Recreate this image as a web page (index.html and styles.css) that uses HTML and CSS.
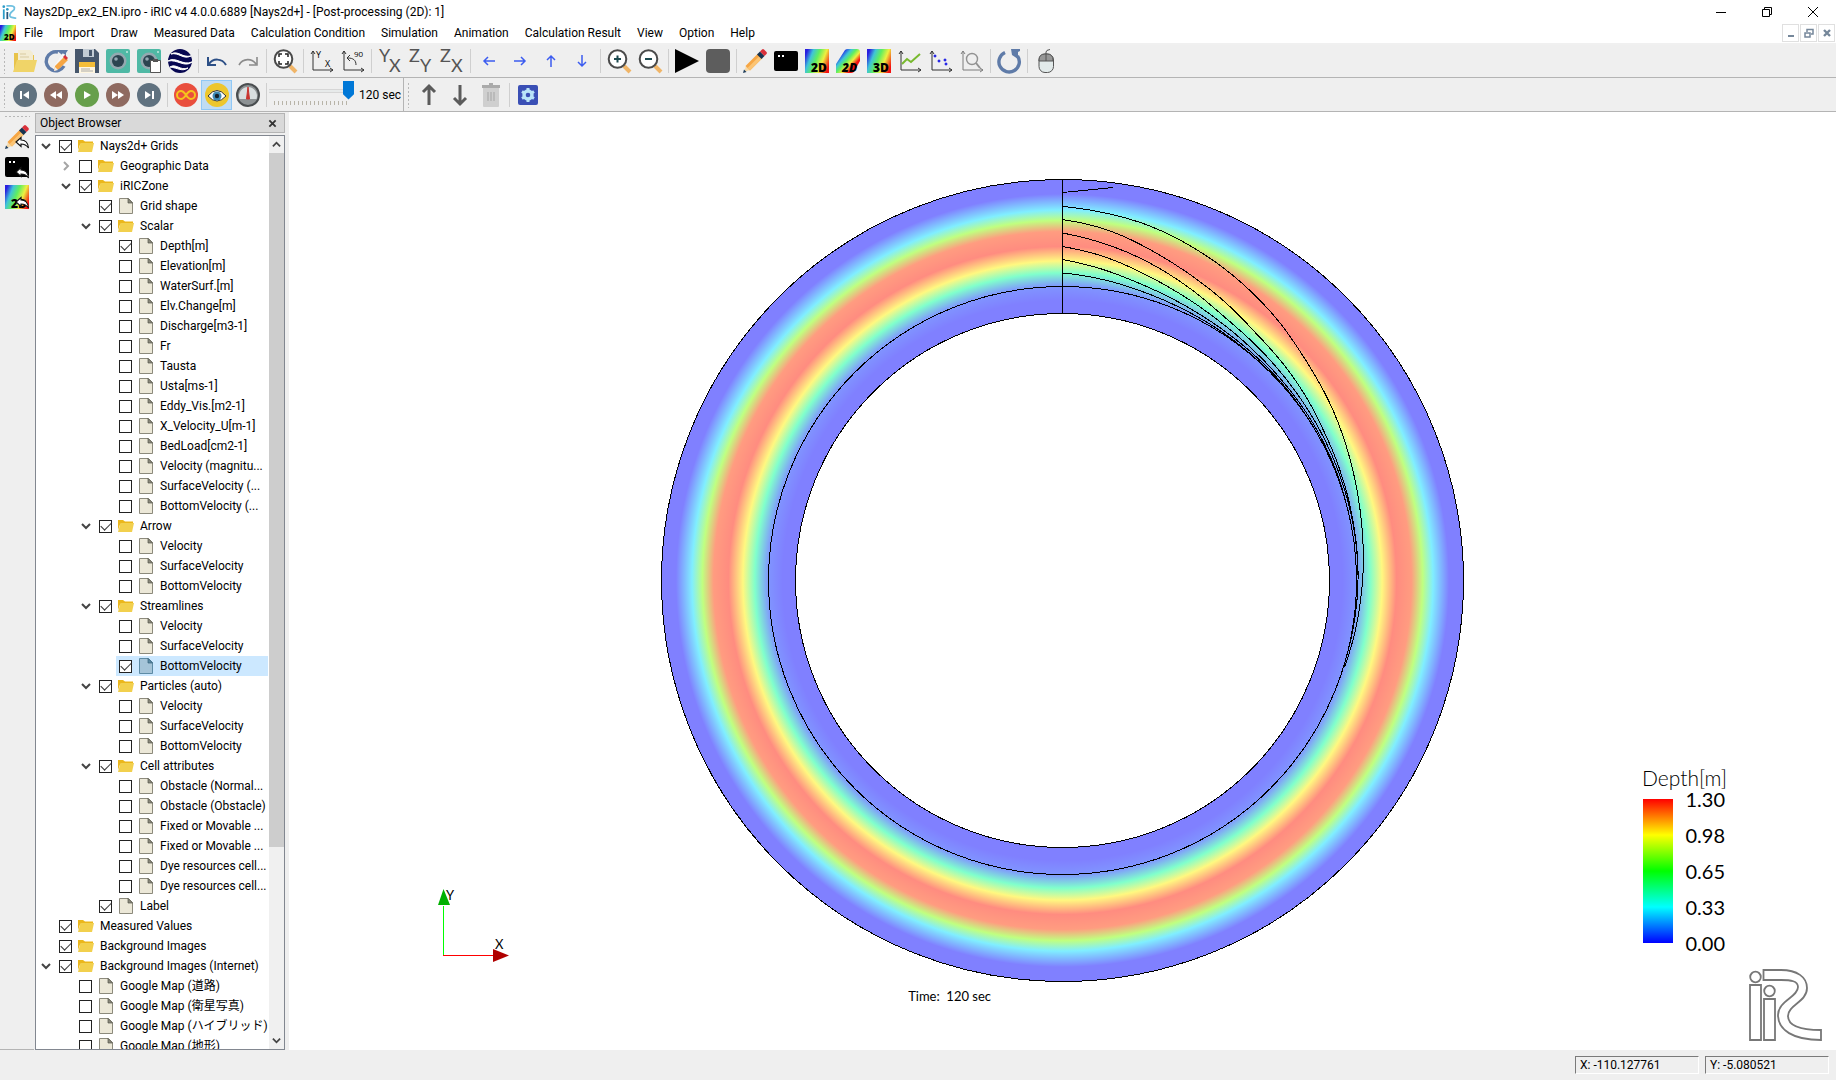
FILE: index.html
```html
<!DOCTYPE html>
<html lang="en">
<head>
<meta charset="utf-8">
<title>Nays2Dp_ex2_EN.ipro - iRIC v4</title>
<link rel="stylesheet" href="styles.css">
</head>
<body>
<svg class="defs" aria-hidden="true">
  <defs>
    <linearGradient id="rainbow" x1="0" y1="0.3" x2="1" y2="0.7">
      <stop offset="0" stop-color="#2a1ee0"/><stop offset="0.22" stop-color="#3fc4d8"/><stop offset="0.45" stop-color="#5fee60"/><stop offset="0.7" stop-color="#eef040"/><stop offset="1" stop-color="#f41010"/>
    </linearGradient>
    <linearGradient id="rainbow-tilt" x1="0.1" y1="0.15" x2="0.9" y2="0.85">
      <stop offset="0.08" stop-color="#1c18e8"/><stop offset="0.3" stop-color="#3fc4d8"/><stop offset="0.45" stop-color="#5fee60"/><stop offset="0.62" stop-color="#eef040"/><stop offset="0.8" stop-color="#f41010"/>
    </linearGradient>
    <symbol id="i-folder" viewBox="0 0 16 16"><path d="M0 2h5l2 1.500h8v3H2L0 12z" fill="#ebb71c"/><path d="M2.500 5H16l-2 9H0z" fill="#f2d04e"/></symbol>
    <symbol id="i-file" viewBox="0 0 16 16"><path d="M1.500.5h9l4 4v11h-13z" fill="#ece8d8" stroke="#8c8a7c"/><path d="M10 .5v4.500h4.500z" fill="#8c8a7c" stroke="#55544c" stroke-width=".7"/></symbol>
    <symbol id="i-file-sel" viewBox="0 0 16 16"><path d="M1.500.5h9l4 4v11h-13z" fill="#a5c4d8" stroke="#5d8ba5"/><path d="M10 .5v4.500h4.500z" fill="#5d8ba5" stroke="#35617c" stroke-width=".7"/></symbol>
    <symbol id="i-down" viewBox="0 0 10 10"><path d="M1 3l4 4 4-4" fill="none" stroke="#444" stroke-width="2"/></symbol>
    <symbol id="i-right" viewBox="0 0 10 10"><path d="M3 1l4 4-4 4" fill="none" stroke="#a5a5a5" stroke-width="2"/></symbol>
    <symbol id="i-up" viewBox="0 0 10 10"><path d="M1 7l4-4 4 4" fill="none" stroke="#444" stroke-width="2"/></symbol>
    <symbol id="i-pencil" viewBox="0 0 24 24"><path d="M1 23l2-6 4 4z" fill="#f6d9a8"/><path d="M0 24l1-3.500L3.500 23z" fill="#1d3c5a"/><path d="M2.500 17L15 4.500l4.500 4.500L7 21.500z" fill="#f6a644"/><path d="M4.500 19L17 6.500l2.500 2.500L7 21.500z" fill="#fbc474"/><path d="M14 5.500L17 2.500 21.500 7 18.500 10z" fill="#173350"/><path d="M17 2.500L19 .5q1-.8 2 0L23.500 3q.8 1 0 2l-2 2z" fill="#d9303a"/></symbol>
    <symbol id="i-console" viewBox="0 0 24 24"><rect y="2" width="24" height="20" rx="2"/><path d="M4 6h2v2H4zM8 6h2v2H8z" fill="#fff"/></symbol>
    <symbol id="i-2d" viewBox="0 0 24 24"><rect width="24" height="24" fill="url(#rainbow)"/><text x="6" y="23" font-size="12" font-weight="800" class="glyph">2D</text></symbol>
    <symbol id="i-3d" viewBox="0 0 24 24"><rect width="24" height="24" fill="url(#rainbow)"/><text x="6" y="23" font-size="12" font-weight="800" class="glyph">3D</text></symbol>
    <symbol id="i-bird" viewBox="0 0 24 24"><path d="M0 24v-9L9 1q1-1 3-1h9q3 0 3 3v9l-5 9q-1 3-4 3z" fill="url(#rainbow-tilt)"/><text x="6" y="23" font-size="12" font-weight="800" font-style="italic" class="glyph">2D</text></symbol>
    <symbol id="i-reply" viewBox="0 0 24 24"><path d="M11 17l5-4.500V15c4.500 0 7 2.500 7.500 8-2-3-4-4-7.500-4v2.500z" fill="#fff" stroke="#111" stroke-width="1.200"/></symbol>
    <symbol id="i-axes" viewBox="0 0 24 24"><path d="M3 2v19h20M1 5l2-3 2 3M20 19l3 2-3 2" fill="none" stroke="#333"/></symbol>
    <symbol id="i-lens" viewBox="0 0 24 24"><path d="M17 17l6 6" stroke="#f0b568" stroke-width="4"/><circle cx="10.500" cy="10" r="8.800" fill="#fff" stroke="#4a4a4a" stroke-width="2"/></symbol>
    <symbol id="i-camera" viewBox="0 0 24 24"><rect width="24" height="24" rx="2" fill="#4fb9a5"/><circle cx="12" cy="12" r="8.500" fill="#94a9b0"/><circle cx="12" cy="12" r="6" fill="#2c4450"/><circle cx="10" cy="10" r="1.800" fill="#93a8b2"/><path d="M20 3h2" stroke="#fff"/></symbol>
    <symbol id="i-arrow" viewBox="0 0 24 24"><path d="M12 22V3M6 9l6-6 6 6" fill="none" stroke="#5b5b5b" stroke-width="3"/></symbol>
    <symbol id="i-blue-arrow" viewBox="0 0 24 24"><path d="M18 12H7M11 8l-4 4 4 4" fill="none" stroke="#3c5cf0" stroke-width="1.500"/></symbol>
    <symbol id="i-rewind" viewBox="0 0 24 24"><circle cx="12" cy="12" r="12" fill="#8f6a60"/><path d="M12 8v8l-6-4zM18 8v8l-6-4z" fill="#fff"/></symbol>
    <symbol id="i-first" viewBox="0 0 24 24"><circle cx="12" cy="12" r="12" fill="#607280"/><path d="M16 8v8l-6-4zM7 8h2v8H7z" fill="#fff"/></symbol>
    <symbol id="i-reload" viewBox="0 0 24 24"><path d="M8 3.500A10.200 10.200 0 1 0 20.500 7" fill="none" stroke="#5f7ba8" stroke-width="3.400"/><path d="M14 0h9v2l-2 1v7l-6-4z" fill="#5f7ba8"/></symbol>
  </defs>
</svg>

<header class="titlebar">
  <svg class="app-icon" viewBox="0 0 18 18"><g fill="#2d9cc8"><circle cx="2" cy="3" r="1.500"/><circle cx="6" cy="6" r="1.500"/><path d="M1 6h2v11H1z"/></g><path d="M5 9h2v8H5z" fill="#26557c"/><path d="M5 2h5c5 0 5 4 2 6s-5 6-1 7 3 1 5 1" fill="none" stroke="#6fc0e0" stroke-width="2"/></svg>
  <h1>Nays2Dp_ex2_EN.ipro - iRIC v4 4.0.0.6889 [Nays2d+] - [Post-processing (2D): 1]</h1>
  <div class="window-buttons">
    <button aria-label="Minimize"><svg viewBox="0 0 10 10"><path d="M0 5.500h10" stroke="#000"/></svg></button>
    <button aria-label="Restore"><svg viewBox="0 0 10 10"><path d="M.5 2.500h7v7h-7zM2.500 2.500v-2h7v7h-2" fill="none" stroke="#000"/></svg></button>
    <button aria-label="Close"><svg viewBox="0 0 10 10"><path d="M0 0l10 10M10 0L0 10" stroke="#000"/></svg></button>
  </div>
</header>

<nav class="menubar">
  <svg class="doc-icon"><use href="#i-2d"/></svg>
  <button>File</button><button>Import</button><button>Draw</button><button>Measured Data</button><button>Calculation Condition</button><button>Simulation</button><button>Animation</button><button>Calculation Result</button><button>View</button><button>Option</button><button>Help</button>
  <div class="mdi-buttons">
    <button aria-label="Minimize view"><svg viewBox="0 0 10 10"><path d="M2 8h6" stroke="#75879a" stroke-width="2"/></svg></button>
    <button aria-label="Restore view"><svg viewBox="0 0 10 10"><path d="M1 5h5v4H1zM3 4V1.500h6V6H7" fill="none" stroke="#75879a" stroke-width="1.500"/></svg></button>
    <button aria-label="Close view"><svg viewBox="0 0 10 10"><path d="M2 2l6 6M8 2L2 8" stroke="#75879a" stroke-width="2.400"/></svg></button>
  </div>
</nav>

<div class="toolbar main-tools">
  <span class="grip"></span>
  <button aria-label="Open"><svg viewBox="0 0 24 24"><path d="M1 4h5l1 2h14v17H1z" fill="#e8c34a"/><path d="M5 1h12l3 3v14H5z" fill="#f3ecd2"/><path d="M7 5h6M7 8h9" stroke="#d9cba0"/><path d="M4 11h20l-3 12H0z" fill="#f0d468"/></svg></button>
  <button aria-label="Reload"><svg viewBox="0 0 24 24"><path d="M14 3A9.500 9.500 0 1 0 20 17" fill="none" stroke="#5f7ba8" stroke-width="3.400"/><path d="M12 1h12l-2 3v5z" fill="#5f7ba8"/><path d="M20 5L10 20" stroke="#f6f6f6" stroke-width="3"/><path d="M10 22l1-5 9-9 4 3-9 9z" fill="#f6a644"/><path d="M19 8l2-2 3 3-2 2z" fill="#d9303a"/><path d="M10 22l1-4 3 3z" fill="#eee"/></svg></button>
  <button aria-label="Save"><svg viewBox="0 0 24 24"><path d="M0 0h20l4 4v20H0z" fill="#47576c"/><path d="M8 0h11v8H8z" fill="#c3ccd4"/><path d="M14 1h3v6h-3z" fill="#47576c"/><path d="M4 13h16v11H4z" fill="#f4bd38"/><path d="M4 18h16v6H4z" fill="#fff6e0"/><path d="M6 20h9M6 22h12" stroke="#aaa"/></svg></button>
  <button aria-label="Snapshot"><svg><use href="#i-camera"/></svg></button>
  <button aria-label="Copy snapshot"><svg viewBox="0 0 24 24"><use href="#i-camera"/><path d="M13.500 11.500h10v12h-10z" fill="#fff" stroke="#555"/><path d="M16 10h5v3h-5z" fill="#555"/></svg></button>
  <button aria-label="Google Earth"><svg viewBox="0 0 24 24"><circle cx="12" cy="12" r="12" fill="#070752"/><path d="M3 5c7-4 11 4 20 2-8 4-12-4-20-2zM0 12c8-5 14 5 24 1-7 6-15-3-24-1zM2 18c6-4 10 4 18 1-6 4-10 0-18-1z" fill="#fff" stroke="#fff"/></svg></button>
  <span class="sep"></span>
  <button aria-label="Undo"><svg viewBox="0 0 24 24"><path d="M4 15c4-6 13-6 17 1M3 8v8h8" fill="none" stroke="#2c4f86" stroke-width="2"/></svg></button>
  <button aria-label="Redo"><svg viewBox="0 0 24 24"><path d="M20 15c-4-6-13-6-17 1M21 8v8h-8" fill="none" stroke="#8b8b8b" stroke-width="1.600"/></svg></button>
  <span class="sep"></span>
  <button aria-label="Fit"><svg viewBox="0 0 24 24"><use href="#i-lens"/><path d="M6 8V5h3M12 5h3v3M15 12v3h-3M9 15H6v-3" fill="none" stroke="#222" stroke-width="1.500"/></svg></button>
  <span class="sep"></span>
  <button aria-label="Reset rotation"><svg viewBox="0 0 24 24"><use href="#i-axes"/><text x="6" y="9" font-size="9" class="glyph">Y</text><text x="15" y="18" font-size="9" class="glyph">X</text></svg></button>
  <button aria-label="Rotate 90"><svg viewBox="0 0 24 24"><use href="#i-axes"/><path d="M15 16c0-5-3-7-8-7M9 6L6 9l3 3" fill="none" stroke="#333"/><text x="13" y="8" font-size="8" class="glyph">90</text></svg></button>
  <span class="sep"></span>
  <button aria-label="XY plane"><svg viewBox="0 0 24 24"><text x="1" y="13" class="plane">Y</text><text x="11" y="23" class="plane">X</text></svg></button>
  <button aria-label="YZ plane"><svg viewBox="0 0 24 24"><text x="0" y="13" class="plane">Z</text><text x="11" y="23" class="plane">Y</text></svg></button>
  <button aria-label="ZX plane"><svg viewBox="0 0 24 24"><text x="0" y="13" class="plane">Z</text><text x="11" y="23" class="plane">X</text></svg></button>
  <span class="sep"></span>
  <button aria-label="Move left"><svg><use href="#i-blue-arrow"/></svg></button>
  <button aria-label="Move right"><svg class="r180"><use href="#i-blue-arrow"/></svg></button>
  <button aria-label="Move up"><svg class="r90"><use href="#i-blue-arrow"/></svg></button>
  <button aria-label="Move down"><svg class="r270"><use href="#i-blue-arrow"/></svg></button>
  <span class="sep"></span>
  <button aria-label="Zoom in"><svg viewBox="0 0 24 24"><use href="#i-lens"/><path d="M7 10h7M10.500 6.500v7" stroke="#1d4a50" stroke-width="2"/></svg></button>
  <button aria-label="Zoom out"><svg viewBox="0 0 24 24"><use href="#i-lens"/><path d="M7 10h7" stroke="#1d4a50" stroke-width="2"/></svg></button>
  <span class="sep"></span>
  <button aria-label="Run"><svg viewBox="0 0 24 24"><path d="M0 0l24 12L0 24z"/></svg></button>
  <button aria-label="Stop"><svg viewBox="0 0 24 24"><rect width="24" height="24" rx="4" fill="#5d5d5d"/></svg></button>
  <span class="sep"></span>
  <button aria-label="Pre-processor"><svg><use href="#i-pencil"/></svg></button>
  <button aria-label="Solver console"><svg><use href="#i-console"/></svg></button>
  <button aria-label="2D window"><svg><use href="#i-2d"/></svg></button>
  <button aria-label="2D bird's eye window"><svg><use href="#i-bird"/></svg></button>
  <button aria-label="3D window"><svg><use href="#i-3d"/></svg></button>
  <button aria-label="Graph"><svg viewBox="0 0 24 24"><use href="#i-axes"/><path d="M4 15l5-5 4 3 9-8" fill="none" stroke="#78b92e" stroke-width="2"/></svg></button>
  <button aria-label="Scatter chart"><svg viewBox="0 0 24 24"><use href="#i-axes"/><path d="M5 6h2v2H5zM9 11h2v2H9zM15 10h2v2h-2zM16 14h2v2h-2z" fill="#2929e6" stroke="#2929e6" stroke-width=".6"/></svg></button>
  <button aria-label="Verification"><svg viewBox="0 0 24 24" class="dim"><use href="#i-axes"/><circle cx="12" cy="10" r="5.500" fill="none" stroke="#555" stroke-width="1.400"/><path d="M16 14l4 5" stroke="#555" stroke-width="2"/></svg></button>
  <span class="sep"></span>
  <button aria-label="Refresh"><svg><use href="#i-reload"/></svg></button>
  <span class="sep"></span>
  <button aria-label="Mouse hint"><svg viewBox="0 0 24 24"><path d="M12 5V3q0-2 4-2.500" fill="none" stroke="#555"/><rect x="5" y="5" width="14.500" height="18.500" rx="6" fill="#e2eaea" stroke="#555"/><path d="M5 12v-1q0-6 6-6h2q6 0 6 6v1z" fill="#979797" stroke="#555"/><path d="M12 5v7" stroke="#555"/></svg></button>
</div>

<div class="toolbar">
  <span class="grip"></span>
  <button aria-label="First step"><svg><use href="#i-first"/></svg></button>
  <button aria-label="Step back"><svg><use href="#i-rewind"/></svg></button>
  <button aria-label="Play"><svg viewBox="0 0 24 24"><circle cx="12" cy="12" r="12" fill="#679f4b"/><path d="M9 8l7 4-7 4z" fill="#fff"/></svg></button>
  <button aria-label="Step forward"><svg class="r180"><use href="#i-rewind"/></svg></button>
  <button aria-label="Last step"><svg class="r180"><use href="#i-first"/></svg></button>
  <span class="sep"></span>
  <button aria-label="Loop"><svg viewBox="0 0 24 24"><circle cx="12" cy="12" r="12" fill="#e94e3d"/><path d="M12 12c-2-3-3-4-5-4a4 4 0 0 0 0 8c2 0 3-1 5-4s3-4 5-4a4 4 0 0 1 0 8c-2 0-3-1-5-4z" fill="none" stroke="#f6c31c" stroke-width="2"/></svg></button>
  <button class="pressed" aria-label="Follow last step"><svg viewBox="0 0 24 24"><circle cx="12" cy="12" r="12" fill="#edc62c"/><path d="M3 13q9-11 18 0-9 10-18 0z" fill="#fff" stroke="#333"/><circle cx="12" cy="13" r="4.500" fill="#3d88b4"/><circle cx="12" cy="13" r="2.200" fill="#15222c"/></svg></button>
  <button aria-label="Animation speed"><svg viewBox="0 0 24 24"><circle cx="12" cy="12" r="11" fill="#8d9294" stroke="#4a4e50" stroke-width="2"/><path d="M3.500 16a9 9 0 1 1 17 0z" fill="#d9dfe0"/><path d="M10.500 16L12 4l1.500 12z" fill="#c9342e" stroke="#c9342e"/></svg></button>
  <span class="sep"></span>
  <div class="time-slider">
    <input type="range" id="step" min="0" max="120" value="120">
    <span class="ticks"></span>
  </div>
  <label class="step-label" for="step">120 sec</label>
  <span class="divider"></span>
  <span class="grip"></span>
  <button aria-label="Move item up"><svg><use href="#i-arrow"/></svg></button>
  <button aria-label="Move item down"><svg class="r180"><use href="#i-arrow"/></svg></button>
  <button aria-label="Delete item"><svg viewBox="0 0 24 24"><path d="M4 4h16v19q0 1-1 1H5q-1 0-1-1z" fill="#cfcfcf"/><path d="M3 2h18v3H3zM10 0h4v2h-4z" fill="#aaa"/><path d="M9 9v9M12 9v9M15 9v9" stroke="#a5a5a5"/></svg></button>
  <span class="sep"></span>
  <button aria-label="Properties"><svg viewBox="0 0 24 24"><rect x="2" y="2" width="20" height="20" rx="2" fill="#3a4fb5"/><circle cx="12" cy="12" r="4" fill="none" stroke="#b9e4f8" stroke-width="3.400"/><path d="M12 5v2.500M12 16.500V19M6 8.500l2 1.200M16 14.300l2 1.200M6 15.500l2-1.200M16 9.700l2-1.200" stroke="#b9e4f8" stroke-width="3"/></svg></button>
</div>

<div class="workspace">
  <aside class="side-strip">
    <span class="grip-h"></span>
    <button aria-label="Focus pre-processor"><svg viewBox="0 0 24 24"><use href="#i-pencil"/><use href="#i-reply"/></svg></button>
    <button aria-label="Focus solver console"><svg viewBox="0 0 24 24"><use href="#i-console"/><use href="#i-reply"/></svg></button>
    <button aria-label="Focus 2D window"><svg viewBox="0 0 24 24"><use href="#i-2d"/><use href="#i-reply"/></svg></button>
  </aside>

  <section class="dock">
    <div class="dock-title"><h2>Object Browser</h2><button aria-label="Close panel"><svg viewBox="0 0 10 10"><path d="M1.500 1.500l7 7M8.500 1.500l-7 7" stroke="#333" stroke-width="2"/></svg></button></div>
    <div class="tree-frame">
      <ul class="tree">
        <li class="l0"><svg class="tw"><use href="#i-down"/></svg><label><input type="checkbox" checked><svg><use href="#i-folder"/></svg>Nays2d+ Grids</label></li>
        <li class="l1"><svg class="tw"><use href="#i-right"/></svg><label><input type="checkbox"><svg><use href="#i-folder"/></svg>Geographic Data</label></li>
        <li class="l1"><svg class="tw"><use href="#i-down"/></svg><label><input type="checkbox" checked><svg><use href="#i-folder"/></svg>iRICZone</label></li>
        <li class="l2"><label><input type="checkbox" checked><svg><use href="#i-file"/></svg>Grid shape</label></li>
        <li class="l2"><svg class="tw"><use href="#i-down"/></svg><label><input type="checkbox" checked><svg><use href="#i-folder"/></svg>Scalar</label></li>
        <li class="l3"><label><input type="checkbox" checked><svg><use href="#i-file"/></svg>Depth[m]</label></li>
        <li class="l3"><label><input type="checkbox"><svg><use href="#i-file"/></svg>Elevation[m]</label></li>
        <li class="l3"><label><input type="checkbox"><svg><use href="#i-file"/></svg>WaterSurf.[m]</label></li>
        <li class="l3"><label><input type="checkbox"><svg><use href="#i-file"/></svg>Elv.Change[m]</label></li>
        <li class="l3"><label><input type="checkbox"><svg><use href="#i-file"/></svg>Discharge[m3-1]</label></li>
        <li class="l3"><label><input type="checkbox"><svg><use href="#i-file"/></svg>Fr</label></li>
        <li class="l3"><label><input type="checkbox"><svg><use href="#i-file"/></svg>Tausta</label></li>
        <li class="l3"><label><input type="checkbox"><svg><use href="#i-file"/></svg>Usta[ms-1]</label></li>
        <li class="l3"><label><input type="checkbox"><svg><use href="#i-file"/></svg>Eddy_Vis.[m2-1]</label></li>
        <li class="l3"><label><input type="checkbox"><svg><use href="#i-file"/></svg>X_Velocity_U[m-1]</label></li>
        <li class="l3"><label><input type="checkbox"><svg><use href="#i-file"/></svg>BedLoad[cm2-1]</label></li>
        <li class="l3"><label><input type="checkbox"><svg><use href="#i-file"/></svg>Velocity (magnitu...</label></li>
        <li class="l3"><label><input type="checkbox"><svg><use href="#i-file"/></svg>SurfaceVelocity (...</label></li>
        <li class="l3"><label><input type="checkbox"><svg><use href="#i-file"/></svg>BottomVelocity (...</label></li>
        <li class="l2"><svg class="tw"><use href="#i-down"/></svg><label><input type="checkbox" checked><svg><use href="#i-folder"/></svg>Arrow</label></li>
        <li class="l3"><label><input type="checkbox"><svg><use href="#i-file"/></svg>Velocity</label></li>
        <li class="l3"><label><input type="checkbox"><svg><use href="#i-file"/></svg>SurfaceVelocity</label></li>
        <li class="l3"><label><input type="checkbox"><svg><use href="#i-file"/></svg>BottomVelocity</label></li>
        <li class="l2"><svg class="tw"><use href="#i-down"/></svg><label><input type="checkbox" checked><svg><use href="#i-folder"/></svg>Streamlines</label></li>
        <li class="l3"><label><input type="checkbox"><svg><use href="#i-file"/></svg>Velocity</label></li>
        <li class="l3"><label><input type="checkbox"><svg><use href="#i-file"/></svg>SurfaceVelocity</label></li>
        <li class="l3 selected"><label><input type="checkbox" checked><svg><use href="#i-file-sel"/></svg>BottomVelocity</label></li>
        <li class="l2"><svg class="tw"><use href="#i-down"/></svg><label><input type="checkbox" checked><svg><use href="#i-folder"/></svg>Particles (auto)</label></li>
        <li class="l3"><label><input type="checkbox"><svg><use href="#i-file"/></svg>Velocity</label></li>
        <li class="l3"><label><input type="checkbox"><svg><use href="#i-file"/></svg>SurfaceVelocity</label></li>
        <li class="l3"><label><input type="checkbox"><svg><use href="#i-file"/></svg>BottomVelocity</label></li>
        <li class="l2"><svg class="tw"><use href="#i-down"/></svg><label><input type="checkbox" checked><svg><use href="#i-folder"/></svg>Cell attributes</label></li>
        <li class="l3"><label><input type="checkbox"><svg><use href="#i-file"/></svg>Obstacle (Normal...</label></li>
        <li class="l3"><label><input type="checkbox"><svg><use href="#i-file"/></svg>Obstacle (Obstacle)</label></li>
        <li class="l3"><label><input type="checkbox"><svg><use href="#i-file"/></svg>Fixed or Movable ...</label></li>
        <li class="l3"><label><input type="checkbox"><svg><use href="#i-file"/></svg>Fixed or Movable ...</label></li>
        <li class="l3"><label><input type="checkbox"><svg><use href="#i-file"/></svg>Dye resources cell...</label></li>
        <li class="l3"><label><input type="checkbox"><svg><use href="#i-file"/></svg>Dye resources cell...</label></li>
        <li class="l2"><label><input type="checkbox" checked><svg><use href="#i-file"/></svg>Label</label></li>
        <li class="l0"><label><input type="checkbox" checked><svg><use href="#i-folder"/></svg>Measured Values</label></li>
        <li class="l0"><label><input type="checkbox" checked><svg><use href="#i-folder"/></svg>Background Images</label></li>
        <li class="l0"><svg class="tw"><use href="#i-down"/></svg><label><input type="checkbox" checked><svg><use href="#i-folder"/></svg>Background Images (Internet)</label></li>
        <li class="l1"><label><input type="checkbox"><svg><use href="#i-file"/></svg>Google Map (道路)</label></li>
        <li class="l1"><label><input type="checkbox"><svg><use href="#i-file"/></svg>Google Map (衛星写真)</label></li>
        <li class="l1"><label><input type="checkbox"><svg><use href="#i-file"/></svg><span>Google Map (<span class="kana">ハイブリッド</span>)</span></label></li>
        <li class="l1"><label><input type="checkbox"><svg><use href="#i-file"/></svg>Google Map (地形)</label></li>
      </ul>
      <div class="scrollbar">
        <button aria-label="Scroll up"><svg><use href="#i-up"/></svg></button>
        <div class="track"><div class="thumb"></div></div>
        <button aria-label="Scroll down"><svg><use href="#i-down"/></svg></button>
      </div>
    </div>
  </section>

  <main class="view">
    <svg class="plot" viewBox="-773.5 -468.5 1547 938" role="img" aria-label="Depth contour with streamlines">
      <defs>
        <radialGradient id="depth" gradientUnits="userSpaceOnUse" cx="0" cy="0" r="401">
          <stop offset=".698" stop-color="#8080ff"/><stop offset=".733" stop-color="#8094ff"/><stop offset=".767" stop-color="#80ffcc"/><stop offset=".797" stop-color="#fff880"/><stop offset=".833" stop-color="#ff8c80"/><stop offset=".87" stop-color="#ff9c80"/><stop offset=".898" stop-color="#c0ff80"/><stop offset=".924" stop-color="#80eeff"/><stop offset=".964" stop-color="#8080ff"/>
        </radialGradient>
      </defs>
      <circle r="334" fill="none" stroke="url(#depth)" stroke-width="134"/>
      <g fill="none" stroke="#000" shape-rendering="crispEdges">
        <circle r="401"/><circle r="267"/><circle r="294"/><path d="M0-401V-267M0-388L51-393"/>
        <g id="streamlines"></g>
      </g>
    </svg>
    <svg class="axes" viewBox="0 0 76 74"><path d="M5.500 17V67" stroke="#00ff00"/><path d="M5 66.500h51" stroke="#f00"/><path d="M5.500 0L12 16H0z" fill="#00b000"/><path d="M55 60v13l16-6.500z" fill="#b00000"/><text x="8" y="11">Y</text><text x="57" y="60">X</text></svg>
    <p class="time">Time:&nbsp; 120 sec</p>
    <figure class="legend">
      <figcaption>Depth[m]</figcaption>
      <div class="scale">
        <div class="bar"></div>
        <ol><li>1.30</li><li>0.98</li><li>0.65</li><li>0.33</li><li>0.00</li></ol>
      </div>
    </figure>
    <svg class="logo" viewBox="0 0 73 74"><g fill="#fff" stroke="#777" stroke-width="1.800"><circle cx="6.500" cy="9" r="5.300"/><circle cx="20.500" cy="23" r="5.300"/><path d="M1 17h11v55H1zM15 31h11v41H15zM14.500 2H32C48 2 58 9 58 20C58 34 39 37 39 48C39 57 50 62 72 62V72C44 72 29 62 29 47C29 33 49 29 49 19C49 13 42 12 32 12H14.500z"/></g></svg>
  </main>
</div>

<footer class="statusbar"><output>X: -110.127761</output><output>Y: -5.080521</output></footer>
<script src="streamlines.js"></script>
</body>
</html>
```
FILE: styles.css
```css
* { box-sizing: border-box; }
body {
  margin: 0; height: 100vh; display: flex; flex-direction: column; overflow: hidden;
  background: #efefef; color: #000;
  font: 12px/16px Roboto, "Noto Sans CJK JP", sans-serif;
}
button { border: 0; padding: 0; background: none; font: inherit; color: inherit; display: flex; align-items: center; justify-content: center; }
h1, h2, p, ul, ol, figure { margin: 0; padding: 0; font-size: inherit; font-weight: normal; list-style: none; }
svg, symbol { overflow: visible; }
.defs { position: absolute; width: 0; height: 0; }
.glyph { font-family: "Open Sans", sans-serif; }
.plane { font: 18px Lato, sans-serif; fill: #555; }
.r90 { transform: rotate(90deg); }
.r180 { transform: rotate(180deg); }
.r270 { transform: rotate(270deg); }
.dim { opacity: .6; }

.titlebar { display: flex; align-items: center; height: 23px; background: #fff; flex: none; }
.app-icon { width: 16px; height: 18px; margin: 0 6px 0 2px; }
.titlebar h1 { flex: 1; padding-top: 1px; }
.window-buttons { display: flex; height: 20px; }
.window-buttons button { width: 46px; }
.window-buttons svg { width: 10px; height: 10px; }

.menubar { display: flex; align-items: center; height: 22px; background: #fff; border-bottom: 2px solid #f0f0f0; flex: none; gap: 16px; }
.doc-icon { width: 16px; height: 16px; margin-right: -8px; }
.mdi-buttons { display: flex; gap: 1px; margin-left: auto; margin-right: 1px; }
.mdi-buttons button { width: 17px; height: 18px; border: 1px solid #e0e0e0; }
.mdi-buttons svg { width: 10px; height: 10px; }

.toolbar { display: flex; align-items: center; height: 34px; flex: none; border-bottom: 1px solid #b4b4b4; }
.main-tools { height: 33px; }
.toolbar button { width: 31px; height: 30px; flex: none; }
.toolbar button.pressed { background: #c0dcf3; border: 1px solid #90c8f6; }
.toolbar svg, .side-strip svg { width: 24px; height: 24px; }
.grip { width: 3px; height: 26px; margin: 0 3px; background: radial-gradient(circle, #b8b8b8 1px, transparent 1px) 0 0 / 3px 4px; flex: none; }
.sep { width: 1px; height: 24px; margin: 0 2px 0 3px; background: #cfcfcf; flex: none; }
.divider { width: 1px; height: 33px; margin-left: 6px; background: #b4b4b4; }

.time-slider { width: 85px; height: 28px; }
.time-slider input { display: block; width: 85px; height: 20px; margin: 0; background: none; appearance: none; }
.time-slider input::-webkit-slider-runnable-track { height: 20px; background: linear-gradient(#d6d6d6, #d6d6d6) 0 8px / 100% 1px no-repeat, linear-gradient(#d6d6d6, #d6d6d6) 0 11px / 100% 1px no-repeat, linear-gradient(#e7eaea, #e7eaea) 0 9px / 100% 2px no-repeat; }
.time-slider input::-webkit-slider-thumb { appearance: none; width: 11px; height: 19px; background: #0078d7; clip-path: polygon(0 0, 100% 0, 100% 73%, 50% 100%, 0 73%); }
.ticks { display: block; width: 75px; height: 4px; margin-left: 5px; background: repeating-linear-gradient(90deg, #b8b4a8 0 1px, transparent 1px 4px); }
.step-label { margin-left: 5px; width: 38px; white-space: nowrap; }

.workspace { flex: 1; display: flex; min-height: 0; }
.side-strip { width: 34px; margin-right: 1px; display: flex; flex-direction: column; align-items: center; gap: 6px; border-bottom: 1px solid #b4b4b4; }
.side-strip button { width: 24px; height: 24px; }
.grip-h { width: 26px; height: 3px; margin: 3px 0 1px; background: radial-gradient(circle, #b8b8b8 1px, transparent 1px) 0 0 / 4px 3px; }

.dock { width: 250px; margin-right: 4px; padding-top: 1px; display: flex; flex-direction: column; }
.dock-title { display: flex; align-items: center; justify-content: space-between; height: 20px; padding: 0 7px 0 4px; margin-bottom: 2px; background: #d9d9d9; border: 1px solid #b4b4b4; flex: none; }
.dock-title svg { width: 9px; height: 9px; }
.tree-frame { flex: 1; min-height: 0; display: flex; background: #fff; border: 1px solid #828790; }
.tree { flex: 1; overflow: hidden; }
.tree li { display: flex; height: 20px; margin-right: 1px; }
.tree label { flex: 1; display: flex; align-items: center; padding-left: 3px; white-space: nowrap; }
.tree .tw { width: 10px; height: 10px; margin: 5px; flex: none; }
.tree li > label:first-child { margin-left: 20px; }
.tree .l1 { padding-left: 20px; }
.tree .l2 { padding-left: 40px; }
.tree .l3 { padding-left: 60px; }
.tree .selected label { background: #cce8ff; }
.tree label svg { width: 16px; height: 16px; margin: 0 6px; flex: none; }
.tree input { appearance: none; width: 13px; height: 13px; margin: 0; flex: none; border: 1px solid #222; background: #fff; display: grid; place-items: center; }
.tree input:checked::before { content: ""; width: 9px; height: 5px; margin-bottom: 3px; border: solid #333; border-width: 0 0 1px 1px; transform: rotate(-45deg); }
.kana { font-feature-settings: "hwid"; }
.scrollbar { width: 15px; background: #f0f0f0; display: flex; flex-direction: column; flex: none; }
.scrollbar button { height: 17px; }
.scrollbar svg { width: 9px; height: 9px; }
.track { flex: 1; }
.thumb { height: 79%; background: #cdcdcd; }

.view { position: relative; flex: 1; min-width: 0; background: #fff; overflow: hidden; }
.plot { display: block; width: 100%; height: 100%; }
.axes, .time, .legend, .logo { position: absolute; }
.axes { left: 149px; bottom: 87px; width: 76px; height: 74px; font: 13px Lato, sans-serif; }
.time { right: 845px; bottom: 46px; font: 13px/16px Lato, sans-serif; white-space: nowrap; }
.legend { right: 108px; bottom: 97px; width: 86px; font: 300 20px/20px Lato, sans-serif; }
.legend figcaption { font-size: 21px; white-space: nowrap; }
.legend .scale { display: flex; justify-content: space-between; align-items: center; padding-right: 3px; margin-top: 1px; }
.legend .bar { width: 30px; height: 144px; margin-left: 1px; background: linear-gradient(red, #ff0 25%, #0f0 50%, #0ff 75%, #00f); }
.legend ol { display: flex; flex-direction: column; gap: 16px; }
.logo { right: 14px; bottom: 8px; width: 73px; height: 74px; }

.statusbar { flex: none; height: 30px; display: flex; justify-content: flex-end; gap: 6px; padding: 6px 7px 6px 0; }
.statusbar output { width: 124px; padding-left: 4px; border: 1px solid; border-color: #7a7a7a #fff #fff #7a7a7a; font-size: 12px; line-height: 17px; }
```
FILE: streamlines.js
```js
// Each streamline: [degrees clockwise from the inlet, radius] samples.
const lines = [
  [[0, 374], [4.2, 371.5], [13.9, 365], [24, 355], [30.7, 347.7], [38.5, 339], [48, 328], [58, 319.5], [67.2, 312], [75.5, 306.5], [81.7, 303.3], [85.4, 302], [90, 300], [96, 298], [107, 295]],
  [[0, 361], [7.2, 353.5], [16, 340.5], [22.6, 331.5], [30.6, 322], [38, 314], [46, 309], [53, 305], [61, 300.7], [75.5, 297], [90, 295.500], [105, 294]],
  [[0, 347.5], [7, 339.5], [14.8, 330], [23.6, 318.6], [32.2, 308.8], [44, 302.5], [55, 299], [70, 296.5], [90, 295.5]],
  [[0, 334], [7.7, 326], [16, 316], [24.4, 308], [33, 302], [45, 297.500], [60, 295.500], [75, 294]],
  [[0, 321], [7, 314], [15, 306.5], [25, 300.5], [35, 297], [48, 295], [60, 294]],
  [[0, 307.5], [8, 303.5], [16, 299.5], [26, 296.5], [38, 294.5], [46, 294]]
];

function radiusAt(samples, deg) {
  let i = 0;
  while (i < samples.length - 2 && samples[i + 1][0] < deg) i++;
  const slope = (a, b) => (samples[b][1] - samples[a][1]) / (samples[b][0] - samples[a][0]);
  const last = samples.length - 1;
  const m0 = slope(Math.max(i - 1, 0), i + 1);
  const m1 = slope(i, Math.min(i + 2, last));
  const h = samples[i + 1][0] - samples[i][0];
  const t = (deg - samples[i][0]) / h;
  return (2 * t ** 3 - 3 * t ** 2 + 1) * samples[i][1] + (t ** 3 - 2 * t ** 2 + t) * h * m0
    + (3 * t ** 2 - 2 * t ** 3) * samples[i + 1][1] + (t ** 3 - t ** 2) * h * m1;
}

const group = document.getElementById("streamlines");
for (const samples of lines) {
  const points = [];
  for (let deg = 0; deg <= samples[samples.length - 1][0]; deg++) {
    const r = radiusAt(samples, deg);
    const a = deg * Math.PI / 180;
    points.push(`${(r * Math.sin(a)).toFixed(1)},${(-r * Math.cos(a)).toFixed(1)}`);
  }
  const line = document.createElementNS("http://www.w3.org/2000/svg", "polyline");
  line.setAttribute("points", points.join(" "));
  group.append(line);
}
```
